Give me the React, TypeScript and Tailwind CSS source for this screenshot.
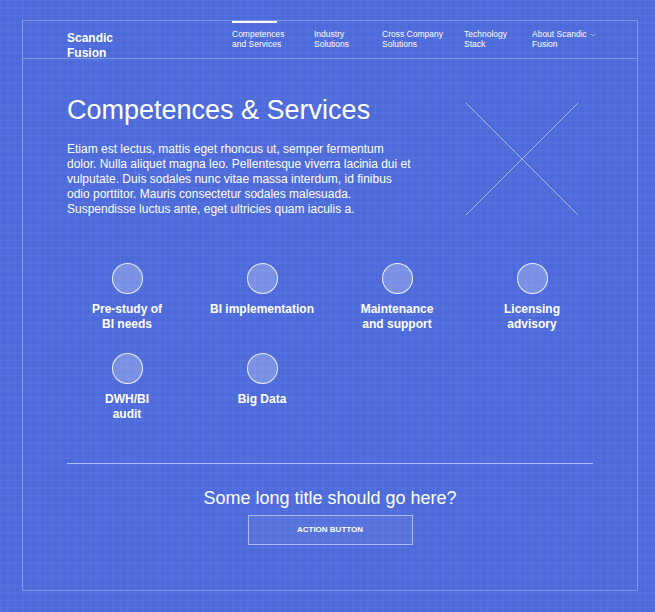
import { ChevronDown } from "lucide-react";

const navItems = [
  { lines: ["Competences", "and Services"], width: "w-[82px]", active: true },
  { lines: ["Industry", "Solutions"], width: "w-[68px]", active: false },
  { lines: ["Cross Company", "Solutions"], width: "w-[82px]", active: false },
  { lines: ["Technology", "Stack"], width: "w-[68px]", active: false },
];

const services = [
  ["Pre-study of", "BI needs"],
  ["BI implementation"],
  ["Maintenance", "and support"],
  ["Licensing", "advisory"],
  ["DWH/BI", "audit"],
  ["Big Data"],
];

function NavItem({ lines, width, active }: { lines: string[]; width: string; active: boolean }) {
  return (
    <div className={`${width} flex flex-col`}>
      <div className={`h-[2px] w-[45px] ${active ? "bg-white" : "bg-transparent"}`} />
      <div className="mt-[7px] text-[8.5px] font-medium leading-[9.5px] text-white">
        {lines[0]}
        <br />
        {lines[1]}
      </div>
    </div>
  );
}

function ServiceItem({ lines }: { lines: string[] }) {
  return (
    <div className="flex w-[120px] flex-col items-center">
      <div className="h-[31px] w-[31px] rounded-full border border-white/85 bg-white/25" />
      <div className="mt-[8px] text-center text-[12px] font-bold leading-[15px] text-white">
        {lines.map((l) => (
          <div key={l}>{l}</div>
        ))}
      </div>
    </div>
  );
}

export default function App() {
  return (
    <div
      className="min-h-[612px] w-full overflow-hidden bg-[#4d6bdb] bg-[linear-gradient(to_right,rgba(255,255,255,0.05)_1px,transparent_1px),linear-gradient(to_bottom,rgba(255,255,255,0.05)_1px,transparent_1px)] bg-[size:7.5px_7.5px] pt-[20px] pl-[22px]"
      style={{ fontFamily: '"Liberation Sans", Arial, sans-serif' }}
    >
      <div className="h-[571px] w-[616px] border border-white/30">
        {/* header */}
        <div className="flex h-[38px] border-b border-white/30 pl-[44px]">
          <div className="w-[165px] pt-[10px] text-[12px] font-bold leading-[15px] text-white">
            Scandic
            <br />
            Fusion
          </div>
          <div className="flex">
            {navItems.map((n) => (
              <NavItem key={n.lines[0]} {...n} />
            ))}
            <div className="flex flex-col">
              <div className="h-[2px]" />
              <div className="mt-[7px] text-[8.5px] font-medium leading-[9.5px] text-white">
                <div className="flex items-center gap-[2px]">
                  About Scandic <ChevronDown size={8} strokeWidth={1.5} className="mt-[1px]" />
                </div>
                Fusion
              </div>
            </div>
          </div>
        </div>

        {/* main */}
        <div className="px-[44px] pt-[36px]">
          <div className="flex justify-between">
            <div className="w-[345px]">
              <h1 className="text-[27px] font-normal leading-[30px] text-white">
                Competences &amp; Services
              </h1>
              <p className="mt-[17px] text-[12px] leading-[15px] text-white">
                Etiam est lectus, mattis eget rhoncus ut, semper fermentum dolor. Nulla aliquet magna
                leo. Pellentesque viverra lacinia dui et vulputate. Duis sodales nunc vitae massa
                interdum, id finibus odio porttitor. Mauris consectetur sodales malesuada.
                Suspendisse luctus ante, eget ultricies quam iaculis a.
              </p>
            </div>
            <svg className="mt-[8px] mr-[15px] h-[112px] w-[112px]" viewBox="0 0 112 112">
              <line x1="0" y1="0" x2="112" y2="112" stroke="rgba(255,255,255,0.5)" strokeWidth="1" />
              <line x1="112" y1="0" x2="0" y2="112" stroke="rgba(255,255,255,0.5)" strokeWidth="1" />
            </svg>
          </div>

          <div className="mt-[46px] grid grid-cols-[repeat(4,120px)] gap-x-[15px] gap-y-[21px]">
            {services.map((s) => (
              <ServiceItem key={s[0]} lines={s} />
            ))}
          </div>

          <div className="mt-[41px] border-t border-white/55" />

          <div className="flex flex-col items-center">
            <h2 className="mt-[23px] text-[18px] font-normal leading-[22px] text-white">
              Some long title should go here?
            </h2>
            <button className="mt-[6px] flex h-[30px] w-[165px] items-center justify-center border border-white/50 bg-white/5 text-[8px] font-bold text-white">
              ACTION BUTTON
            </button>
          </div>
        </div>
      </div>
    </div>
  );
}
